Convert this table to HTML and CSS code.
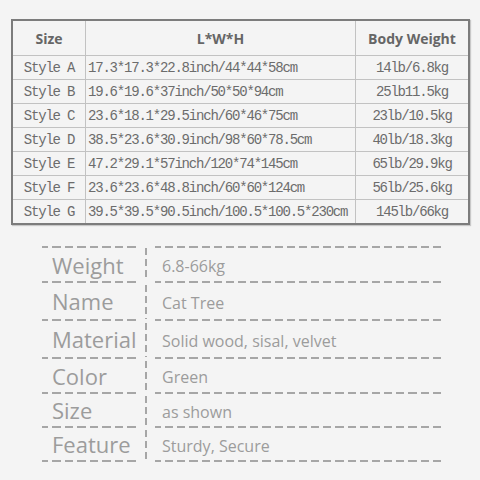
FILE: index.html
```html
<!DOCTYPE html>
<html>
<head>
<meta charset="utf-8">
<link rel="stylesheet" href="styles.css">
</head>
<body>
<div class="page">
  <table class="sizes">
    <colgroup><col class="c1"><col class="c2"><col class="c3"></colgroup>
    <thead>
      <tr><th>Size</th><th>L*W*H</th><th>Body Weight</th></tr>
    </thead>
    <tbody>
      <tr><td class="st">Style A</td><td class="dim">17.3*17.3*22.8inch/44*44*58cm</td><td class="wt">14lb/6.8kg</td></tr>
      <tr><td class="st">Style B</td><td class="dim">19.6*19.6*37inch/50*50*94cm</td><td class="wt">25lb11.5kg</td></tr>
      <tr><td class="st">Style C</td><td class="dim">23.6*18.1*29.5inch/60*46*75cm</td><td class="wt">23lb/10.5kg</td></tr>
      <tr><td class="st">Style D</td><td class="dim">38.5*23.6*30.9inch/98*60*78.5cm</td><td class="wt">40lb/18.3kg</td></tr>
      <tr><td class="st">Style E</td><td class="dim">47.2*29.1*57inch/120*74*145cm</td><td class="wt">65lb/29.9kg</td></tr>
      <tr><td class="st">Style F</td><td class="dim">23.6*23.6*48.8inch/60*60*124cm</td><td class="wt">56lb/25.6kg</td></tr>
      <tr><td class="st">Style G</td><td class="dim">39.5*39.5*90.5inch/100.5*100.5*230cm</td><td class="wt">145lb/66kg</td></tr>
    </tbody>
  </table>

  <div class="specs">
    <div class="row r1"><div class="label">Weight</div><div class="sep"></div><div class="value">6.8-66kg</div></div>
    <div class="row r2"><div class="label">Name</div><div class="sep"></div><div class="value">Cat Tree</div></div>
    <div class="row r3"><div class="label">Material</div><div class="sep"></div><div class="value">Solid wood, sisal, velvet</div></div>
    <div class="row r4"><div class="label">Color</div><div class="sep"></div><div class="value">Green</div></div>
    <div class="row r5"><div class="label">Size</div><div class="sep"></div><div class="value">as shown</div></div>
    <div class="row r6"><div class="label">Feature</div><div class="sep"></div><div class="value">Sturdy, Secure</div></div>
  </div>
</div>
</body>
</html>
```

FILE: styles.css
```css
html, body {
  margin: 0;
  padding: 0;
  background: #f4f4f4;
}

.page {
  width: 480px;
  height: 480px;
  padding-top: 19px;
  box-sizing: border-box;
}

.sizes {
  margin-left: 11px;
  width: 459px;
  table-layout: fixed;
  border-collapse: separate;
  border-spacing: 0;
  border: 2px solid #7c7c7c;
  box-shadow: 1px 1px 1px #c8c8c8;
  background: #f4f4f4;
}

.c1 { width: 73px; }
.c2 { width: 270px; }
.c3 { width: 112px; }

.sizes th,
.sizes td {
  padding: 0;
  border-right: 1px solid #c2c2c2;
  border-bottom: 1px solid #c2c2c2;
  white-space: nowrap;
  overflow: hidden;
}

.sizes th:last-child,
.sizes td:last-child {
  border-right: none;
}

.sizes tbody tr:last-child td {
  border-bottom: none;
}

.sizes th {
  height: 34px;
  font-family: "Open Sans", sans-serif;
  font-weight: 700;
  font-size: 14px;
  color: #666;
  text-align: center;
}

.sizes td {
  height: 23px;
  font-family: "Liberation Mono", monospace;
  font-size: 14px;
  letter-spacing: -1.2px;
  color: #6c6c6c;
}

.sizes td.st { text-align: center; }
.sizes td.dim { text-align: left; padding-left: 2px; }
.sizes td.wt { text-align: center; }

/* spec list */
.specs {
  margin: 21px 0 0 42px;
  width: 403px;
  display: flex;
  flex-direction: column;
}

.row {
  display: grid;
  grid-template-columns: 98px 15px 290px;
  align-items: stretch;
}

.row.r1 .label,
.row.r1 .value {
  border-top: 2px solid transparent;
  border-image: repeating-linear-gradient(90deg, #a6a6a6 0 8px, transparent 8px 12px) 2;
}

.label,
.value {
  display: flex;
  align-items: center;
  border-bottom: 2px solid transparent;
  border-image: repeating-linear-gradient(90deg, #a6a6a6 0 8px, transparent 8px 12px) 2;
  font-family: "Open Sans", sans-serif;
  color: #9c9c9c;
  white-space: nowrap;
}

.label {
  font-size: 22px;
  padding-left: 10px;
}

.value {
  font-size: 16px;
  padding-left: 7px;
  padding-top: 3px;
}

.sep {
  background: repeating-linear-gradient(180deg, #a6a6a6 0 7px, transparent 7px 11px) no-repeat;
  background-size: 2px calc(100% - 4px);
  background-position: 5px 2px;
}

.r1 { height: 37px; }
.r2 { height: 38px; }
.r3 { height: 38px; }
.r4 { height: 35px; }
.r5 { height: 34px; }
.r6 { height: 34px; }
```
